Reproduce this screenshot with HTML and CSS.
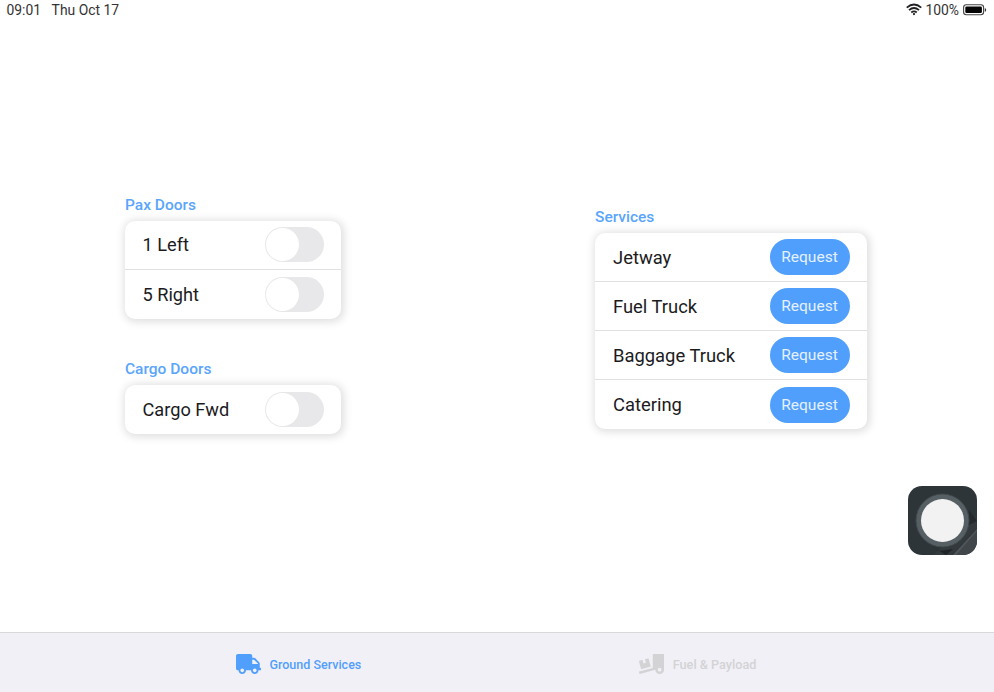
FILE: index.html
```html
<!DOCTYPE html>
<html lang="en">
<head>
<meta charset="utf-8">
<title>Ground Services</title>
<link rel="stylesheet" href="styles.css">
</head>
<body>
<header class="status">
  <span class="time">09:01</span><span class="date">Thu Oct 17</span>
  <div class="power">
    <svg class="wifi" width="16" height="13" viewBox="0 0 17 13" fill="none" stroke="#222" stroke-width="1.9"><path d="M.8 4.5Q8.5-2.2 16.2 4.5M3.2 7.2Q8.5 2.5 13.8 7.2M5.6 9.7Q8.5 7.3 11.4 9.7"/><circle cx="8.5" cy="11.3" r="1.2" fill="#222" stroke="none"/></svg>
    <span class="percent">100%</span>
    <svg class="battery" width="24" height="12" viewBox="0 0 24 12"><rect x=".6" y=".8" width="20" height="10" rx="2.7" fill="#fff" stroke="#444" stroke-width="1.1"/><rect x="2.3" y="2.5" width="16.6" height="6.6" rx="1.3" fill="#050505"/><path d="M21.8 4v3.8q1.4-.6 1.4-1.9T21.8 4z" fill="#333"/></svg>
  </div>
</header>
<main class="content">
  <div class="column doors">
    <section>
      <h2>Pax Doors</h2>
      <div class="card">
        <div class="row"><span>1 Left</span><span class="toggle"></span></div>
        <div class="row"><span>5 Right</span><span class="toggle"></span></div>
      </div>
    </section>
    <section>
      <h2>Cargo Doors</h2>
      <div class="card">
        <div class="row"><span>Cargo Fwd</span><span class="toggle"></span></div>
      </div>
    </section>
  </div>
  <div class="column services">
    <section>
      <h2>Services</h2>
      <div class="card">
        <div class="row"><span>Jetway</span><button>Request</button></div>
        <div class="row"><span>Fuel Truck</span><button>Request</button></div>
        <div class="row"><span>Baggage Truck</span><button>Request</button></div>
        <div class="row"><span>Catering</span><button>Request</button></div>
      </div>
    </section>
  </div>
</main>
<nav class="tabs">
  <a class="tab active"><svg width="25" height="20" viewBox="0 0 640 512" fill="currentColor"><path d="M624 352h-16V243.9c0-12.7-5.1-24.9-14.1-33.9L494 110.1c-9-9-21.2-14.1-33.9-14.1H416V48c0-26.5-21.5-48-48-48H48C21.5 0 0 21.5 0 48v320c0 26.5 21.5 48 48 48h16c0 53 43 96 96 96s96-43 96-96h128c0 53 43 96 96 96s96-43 96-96h48c8.8 0 16-7.2 16-16v-32c0-8.8-7.2-16-16-16zM160 464c-26.5 0-48-21.5-48-48s21.5-48 48-48 48 21.5 48 48-21.5 48-48 48zm320 0c-26.5 0-48-21.5-48-48s21.5-48 48-48 48 21.5 48 48-21.5 48-48 48zm80-208H416V144h44.1l99.9 99.9V256z"/></svg><span>Ground Services</span></a>
  <a class="tab"><svg width="25" height="20" viewBox="0 0 640 512" fill="currentColor"><path d="M50.2 375.6c2.3 8.5 11.1 13.6 19.6 11.3l216.4-58c8.5-2.3 13.6-11.1 11.3-19.6l-49.7-185.5c-2.3-8.5-11.1-13.6-19.6-11.3L151 133.3l24.8 92.7-61.8 16.5-24.8-92.7-77.3 20.7C3.4 172.8-1.7 181.6.6 190.1l49.6 185.5zM384 0c-17.7 0-32 14.3-32 32v323.6L5.9 450c-4.3 1.2-6.8 5.6-5.6 9.8l12.6 46.3c1.2 4.3 5.6 6.8 9.8 5.6l393.7-107.4C418.8 464.1 467.6 512 528 512c61.9 0 112-50.1 112-112V0H384zm144 448c-26.5 0-48-21.5-48-48s21.5-48 48-48 48 21.5 48 48-21.5 48-48 48z"/></svg><span>Fuel &amp; Payload</span></a>
</nav>
<div class="home">
  <svg width="69" height="69" viewBox="0 0 69 69"><defs><clipPath id="tile"><rect width="69" height="69" rx="14"/></clipPath></defs><g clip-path="url(#tile)"><rect width="69" height="69" fill="#2d3538"/><path d="M44 69 69 42V29L25 69z" fill="#33393c"/><path d="M45 69 69 43v26z" fill="#404649"/><path d="M45 69 69 43v2L48 69z" fill="#505659"/><path d="M61 24v15l8-4" fill="#23292c"/><path d="M25 61l6 4 14-2-7 6" fill="#1e2427"/></g><circle cx="34.5" cy="34.5" r="26.5" fill="#555f64" stroke="#41494d" stroke-width="1"/><circle cx="34.5" cy="34.5" r="21.5" fill="#f2f2f2"/></svg>
</div>
</body>
</html>
```
FILE: styles.css
```css
* { box-sizing: border-box; }
body {
  margin: 0;
  height: 692px;
  display: flex;
  flex-direction: column;
  overflow: hidden;
  background: #fff;
  color: #1b1b1d;
  font-family: Roboto, "Liberation Sans", sans-serif;
}
.status {
  height: 20px;
  display: flex;
  align-items: center;
  padding: 0 7px 1px 6.5px;
  font-size: 13.9px;
  line-height: 18px;
  color: #333;
}
.date { margin-left: 10.5px; }
.power { display: flex; align-items: center; margin-left: auto; }
.percent { margin: 1px 4px 0 3px; }
.content {
  flex: 1;
  display: flex;
  justify-content: space-between;
  align-items: center;
  padding: 0 127px 14.6px 125px;
}
.column { display: flex; flex-direction: column; gap: 41.5px; }
.doors { width: 216px; margin-bottom: 7px; }
.services { width: 272px; }
h2 {
  margin: 0 0 7px;
  font-size: 15.5px;
  line-height: 18px;
  font-weight: 500;
  color: #5aa5fc;
}
.card {
  border-radius: 10px;
  background: #fff;
  box-shadow: 1px 1px 8px 2px rgba(0, 0, 0, .13);
}
.row {
  height: 49px;
  display: flex;
  align-items: center;
  justify-content: space-between;
  padding: 0 17.5px 0 18px;
  font-size: 18.4px;
}
.doors .row { padding-left: 17.5px; font-size: 18.2px; }
.row:not(:last-child) { border-bottom: 1px solid #e0e0e0; }
.toggle {
  width: 59px;
  height: 35px;
  padding: 1px;
  border-radius: 18px;
  background: #e8e8ea;
}
.toggle::before {
  content: "";
  display: block;
  width: 33px;
  height: 33px;
  border-radius: 50%;
  background: #fff;
}
button {
  width: 80px;
  height: 36px;
  padding: 0;
  border: 0;
  border-radius: 18px;
  background: #509ffd;
  color: #e6f1ff;
  font: 15.5px Roboto, "Liberation Sans", sans-serif;
}
.tabs {
  height: 60px;
  display: flex;
  justify-content: space-between;
  align-items: center;
  padding: 3px 237.5px 0 235.5px;
  border-top: 1px solid #d9d9dc;
  background: #f1f0f6;
}
.tab {
  display: flex;
  align-items: center;
  gap: 9px;
  font-size: 12.7px;
  font-weight: 500;
  color: #d3d3d5;
}
.active { color: #519ffd; font-size: 12.5px; }
.home {
  position: absolute;
  left: 908px;
  top: 486px;
  width: 69px;
  height: 69px;
}
.home svg { display: block; }
```
